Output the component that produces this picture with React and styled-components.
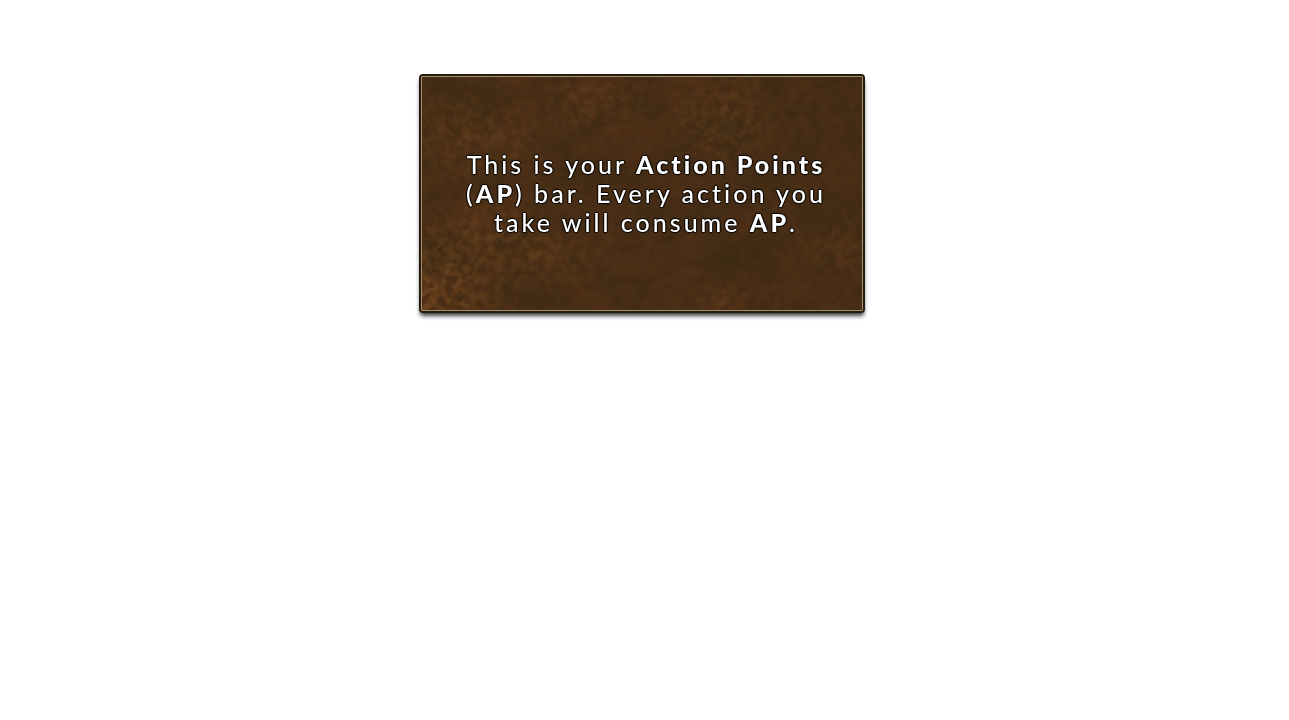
import React from "react";
import styled, { createGlobalStyle } from "styled-components";

const GlobalStyle = createGlobalStyle`
  *, *::before, *::after { box-sizing: border-box; }
  body {
    margin: 0;
    background: #fff;
    font-family: Lato, "Liberation Sans", sans-serif;
  }
`;

const Page = styled.main`
  display: flex;
  justify-content: center;
  padding: 74px 21px 24px 16px;
`;

const Panel = styled.section`
  position: relative;
  isolation: isolate;
  display: flex;
  align-items: center;
  justify-content: center;
  width: 100%;
  max-width: 446px;
  min-height: 239px;
  padding: 24px 24px 24px 32px;
  border: 2px solid #261a0f;
  border-radius: 4px;
  background: #452c15;
  box-shadow: 0 4px 4px -1px rgba(0, 0, 0, 0.75);

  &::after {
    content: "";
    position: absolute;
    inset: 0;
    border: 1px solid #a3906f;
    border-radius: 1px;
    pointer-events: none;
  }
`;

const Texture = styled.svg`
  position: absolute;
  inset: 0;
  z-index: -1;
  width: 100%;
  height: 100%;
`;

const Message = styled.p`
  margin: 0;
  color: #fff;
  font-size: 25px;
  font-weight: 500;
  line-height: 29px;
  letter-spacing: 3px;
  text-align: center;
  text-shadow:
    1px 0 1px #000,
    -1px 0 1px #000,
    0 1px 1px #000,
    0 -1px 1px #000;
`;

const Term = styled.strong`
  font-weight: 900;
`;

const glows = [
  { cx: 5, cy: 222, rx: 90, ry: 65, opacity: 0.5 },
  { cx: 60, cy: 165, rx: 80, ry: 55, opacity: 0.26 },
  { cx: 50, cy: 60, rx: 90, ry: 50, opacity: 0.22 },
  { cx: 170, cy: 25, rx: 60, ry: 35, opacity: 0.2 },
  { cx: 300, cy: 42, rx: 65, ry: 60, opacity: 0.22 },
  { cx: 130, cy: 185, rx: 60, ry: 40, opacity: 0.2 },
  { cx: 300, cy: 225, rx: 30, ry: 24, opacity: 0.22 },
  { cx: 420, cy: 170, rx: 50, ry: 40, opacity: 0.15 },
];

function Leather() {
  return (
    <Texture viewBox="0 0 442 235" preserveAspectRatio="none" aria-hidden="true">
      <defs>
        <filter id="blotches" x="0" y="0" width="100%" height="100%" colorInterpolationFilters="sRGB">
          <feTurbulence type="fractalNoise" baseFrequency="0.025" numOctaves="6" seed="8" />
          <feColorMatrix values="0 0 0 0 0.19  0 0 0 0 0.15  0 0 0 0 0.07  1.1 0 0 0 -0.35" />
        </filter>
        <filter id="grain" x="0" y="0" width="100%" height="100%" colorInterpolationFilters="sRGB">
          <feTurbulence type="fractalNoise" baseFrequency="0.12" numOctaves="5" seed="21" result="noise" />
          <feColorMatrix in="noise" values="0 0 0 0 0.6  0 0 0 0 0.37  0 0 0 0 0.16  2.4 0 0 0 -0.75" result="specks" />
          <feComposite in="specks" in2="SourceGraphic" operator="in" />
        </filter>
        <radialGradient id="glow">
          <stop offset="0" stopColor="#fff" stopOpacity="1" />
          <stop offset="1" stopColor="#fff" stopOpacity="0" />
        </radialGradient>
        <linearGradient id="base" x1="0" y1="0" x2="1" y2="0">
          <stop offset="0" stopColor="#4c2e16" />
          <stop offset="1" stopColor="#472c15" />
        </linearGradient>
      </defs>
      <rect width="442" height="235" fill="url(#base)" />
      <rect width="442" height="235" filter="url(#blotches)" />
      <g filter="url(#grain)">
        <rect width="442" height="235" fill="#fff" opacity="0.08" />
        {glows.map((g) => (
          <ellipse
            key={`${g.cx}-${g.cy}`}
            cx={g.cx}
            cy={g.cy}
            rx={g.rx}
            ry={g.ry}
            opacity={g.opacity}
            fill="url(#glow)"
          />
        ))}
      </g>
    </Texture>
  );
}

export default function App() {
  return (
    <>
      <GlobalStyle />
      <Page>
        <Panel>
          <Leather />
          <Message>
            This is your <Term>Action Points</Term>
            <br />
            (<Term>AP</Term>) bar. Every action you
            <br />
            take will consume <Term>AP</Term>.
          </Message>
        </Panel>
      </Page>
    </>
  );
}
